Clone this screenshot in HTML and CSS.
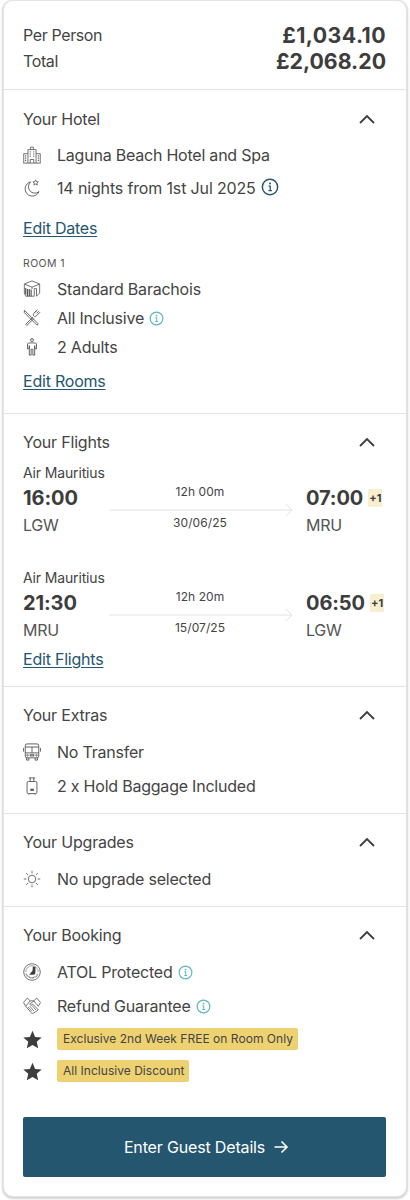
FILE: index.html
```html
<!DOCTYPE html>
<html lang="en">
<head>
<meta charset="utf-8">
<title>Booking summary</title>
<link rel="stylesheet" href="styles.css">
</head>
<body>
<svg class="defs" width="0" height="0" aria-hidden="true">
  <symbol id="chev" viewBox="0 0 18 12"><path d="M2 10 9 3l7 7" fill="none" stroke="#3d3d3d" stroke-width="1.800"/></symbol>
  <symbol id="info" viewBox="0 0 16 16"><circle cx="8" cy="8" r="6.800" fill="none" stroke="currentColor" stroke-width="1.300"/><circle cx="8" cy="4.900" r=".9" fill="currentColor"/><path d="M6.800 7.200H8.200v4M6.700 11.300h3" fill="none" stroke="currentColor" stroke-width="1.100"/></symbol>
  <symbol id="star" viewBox="0 0 18 18"><path d="M9 .8l2.500 5.800 6.200.5-4.700 4.100 1.400 6.100L9 14.100l-5.400 3.200L5 11.200.3 7.100l6.200-.5z" fill="#3d3d3d"/></symbol>
  <symbol id="flightline" viewBox="0 0 184 14"><path d="M0 7h183M177 1l6 6-6 6" fill="none" stroke="#e2e2e2" stroke-width="1"/></symbol>
</svg>
<main class="card">
  <section class="prices">
    <div class="price-row"><span>Per Person</span><strong>£1,034.10</strong></div>
    <div class="price-row"><span>Total</span><strong>£2,068.20</strong></div>
  </section>

  <section class="block hotel">
    <header class="head"><h2>Your Hotel</h2><svg class="chev"><use href="#chev"/></svg></header>
    <div class="row first">
      <svg class="ico" viewBox="0 0 20 20"><g fill="none" stroke="#555" stroke-width=".9"><path d="M5.500 19V4h9v15M.8 19V8.500h4.700M14.500 8.500h4.700V19M.5 19h19M8 19v-4h4v4M8.500 4V1.200h3V4"/><path d="M7.500 6.500h1M11.500 6.500h1M7.500 9h1M11.500 9h1M7.500 11.500h1M11.500 11.500h1M2.300 11h1.200M2.300 13.500h1.200M2.300 16h1.200M16.500 11h1.200M16.500 13.500h1.200M16.500 16h1.200" stroke-width="1.300"/></g></svg>
      <span>Laguna Beach Hotel and Spa</span>
    </div>
    <div class="row nights">
      <svg class="ico" viewBox="0 0 20 20"><path d="M8.500 3.200A8 8 0 1 0 17.800 14 7 7 0 0 1 8.500 3.200z" fill="none" stroke="#555" stroke-width="1"/><path d="M14 1l.9 2 2.100.2-1.600 1.400.5 2.100-1.900-1.100-1.900 1.100.5-2.100L11 3.200l2.100-.2z" fill="none" stroke="#555" stroke-width=".9"/></svg>
      <span>14 nights from 1st Jul 2025</span>
      <svg class="info navy"><use href="#info"/></svg>
    </div>
    <a class="edit dates" href="#">Edit Dates</a>
    <p class="room">ROOM 1</p>
    <div class="row tight">
      <svg class="ico" viewBox="0 0 20 20"><g fill="none" stroke="#555" stroke-width=".9"><path d="M10 1l8.500 3.500v10L15 18V9.500h-2.500V18H3l-1.500-3.500v-10z"/><path d="M1.500 4.500 10 8l8.500-3.500M10 8v2"/><path d="M3 9v7M5 10v8M7 10v8M9 10.500V18" stroke-width="1.300"/></g></svg>
      <span>Standard Barachois</span>
    </div>
    <div class="row tight">
      <svg class="ico" viewBox="0 0 20 20"><g fill="none" stroke="#555" stroke-width="1"><path d="M1.500 1.500 17 16.500l-1.500 1.500L7 9.500 1.500 4z"/><path d="M19 3.500l-4 4c-1 1-2.200 1-3 .2s-.8-2 .2-3l4-4M15 1.800 13 4M17.500 2.500l-2.200 2.200M11 9 3 17l1.300 1.300 8.200-8"/></g></svg>
      <span>All Inclusive</span>
      <svg class="info teal"><use href="#info"/></svg>
    </div>
    <div class="row tight">
      <svg class="ico" viewBox="0 0 20 20"><g fill="none" stroke="#555" stroke-width="1"><circle cx="10" cy="2.300" r="1.600"/><path d="M6 5.500h8l1 1V12h-2V8.500 19h-2v-6.500H9V19H7V8.500 12H5V6.500z"/></g></svg>
      <span>2 Adults</span>
    </div>
    <a class="edit rooms" href="#">Edit Rooms</a>
  </section>

  <section class="block flights sub">
    <header class="head"><h2>Your Flights</h2><svg class="chev"><use href="#chev"/></svg></header>
    <div class="flight">
      <p class="airline">Air Mauritius</p>
      <div class="leg">
        <div class="end"><strong>16:00</strong><span>LGW</span></div>
        <div class="mid"><span>12h 00m</span><svg class="fline"><use href="#flightline"/></svg><span>30/06/25</span></div>
        <div class="end"><div class="arr"><strong>07:00</strong><em>+1</em></div><span>MRU</span></div>
      </div>
    </div>
    <div class="flight second">
      <p class="airline">Air Mauritius</p>
      <div class="leg">
        <div class="end"><strong>21:30</strong><span>MRU</span></div>
        <div class="mid"><span>12h 20m</span><svg class="fline"><use href="#flightline"/></svg><span>15/07/25</span></div>
        <div class="end"><div class="arr"><strong>06:50</strong><em>+1</em></div><span>LGW</span></div>
      </div>
    </div>
    <a class="edit flights-edit" href="#">Edit Flights</a>
  </section>

  <section class="block extras sub">
    <header class="head"><h2>Your Extras</h2><svg class="chev"><use href="#chev"/></svg></header>
    <div class="row first2">
      <svg class="ico" viewBox="0 0 20 20"><g fill="none" stroke="#555" stroke-width="1"><rect x="2.500" y="1" width="15" height="15.500" rx="2"/><path d="M2.500 4.500h15M2.500 11h15M10 4.500V11M.5 5.500v4M19.500 5.500v4M4 16.500V19h2.500v-2.500M13.500 16.500V19H16v-2.500"/><circle cx="5" cy="13.700" r=".9"/><circle cx="15" cy="13.700" r=".9"/><rect x="8" y="13" width="4" height="1.400"/></g></svg>
      <span>No Transfer</span>
    </div>
    <div class="row next">
      <svg class="ico" viewBox="0 0 20 20"><g fill="none" stroke="#555" stroke-width="1"><rect x="4.500" y="5" width="11" height="13.500" rx="1.500"/><path d="M6.500 1h7M8 1v4M12 1v4M6.500 18.500v1M13.500 18.500v1"/><rect x="8.700" y="13.500" width="2.800" height="1.500" fill="#555"/></g></svg>
      <span>2 x Hold Baggage Included</span>
    </div>
  </section>

  <section class="block upgrades sub">
    <header class="head"><h2>Your Upgrades</h2><svg class="chev"><use href="#chev"/></svg></header>
    <div class="row first2">
      <svg class="ico" viewBox="0 0 20 20"><g fill="none" stroke="#555" stroke-width=".9"><circle cx="10" cy="10" r="4.200"/><path d="M10 .8v3M10 16.200v3M.8 10h3M16.200 10h3M3.500 3.500l2.100 2.100M14.400 14.400l2.100 2.100M16.500 3.500l-2.100 2.100M5.600 14.400l-2.100 2.100"/></g></svg>
      <span>No upgrade selected</span>
    </div>
  </section>

  <section class="block booking sub">
    <header class="head"><h2>Your Booking</h2><svg class="chev"><use href="#chev"/></svg></header>
    <div class="row first2">
      <svg class="ico" viewBox="0 0 20 20"><g fill="none" stroke="#555"><circle cx="10" cy="10" r="9.200" stroke-width=".9"/><path d="M3.500 12a7 7 0 0 0 13 0" stroke-width="1.500" stroke-dasharray=".9 .7"/><path d="M3 10a7 7 0 0 1 14 0" stroke-width=".6"/><path d="M10.800 4.300h3V10.500c0 1.500-1 2.500-2.500 2.500H6.500c1-.4 1.800-1 2-2.200 1.500-.6 2.300-2.300 2.300-4z" fill="#3d3d3d" stroke="none"/></g></svg>
      <span>ATOL Protected</span>
      <svg class="info teal"><use href="#info"/></svg>
    </div>
    <div class="row next">
      <svg class="ico" viewBox="0 0 20 20"><g fill="none" stroke="#555" stroke-width=".9"><path d="M.6 6 4.800 1.200 8 4.300 3 10.300zM19.400 6 15.200 1.200 12 4.300l5 6z"/><path d="M8 4.300h4M12 4.300 7.500 8c.8 1.200 2.300 1.200 3.500 0l6 6.300M3 10.300 9 17.300c.8 1 2.200 1.200 3 .4l5-3.400"/><path d="M5.500 11l4.500 5M7.500 10l4.500 5.500M10 9.500l4.500 5" stroke-width=".8"/></g></svg>
      <span>Refund Guarantee</span>
      <svg class="info teal"><use href="#info"/></svg>
    </div>
    <div class="row promo one"><svg class="ico star"><use href="#star"/></svg><span class="badge">Exclusive 2nd Week FREE on Room Only</span></div>
    <div class="row promo two"><svg class="ico star"><use href="#star"/></svg><span class="badge">All Inclusive Discount</span></div>
    <button class="cta" type="button">Enter Guest Details
      <svg class="arrow" viewBox="0 0 16 14"><path d="M1.500 7h12.500M8.500 1.500 14 7l-5.500 5.500" fill="none" stroke="#fff" stroke-width="1.600"/></svg>
    </button>
  </section>
</main>
</body>
</html>
```

FILE: styles.css
```css
* { box-sizing: border-box; }
html, body { margin: 0; padding: 0; background: #fff; }
body {
  width: 410px;
  height: 1200px;
  overflow: hidden;
  font-family: Inter, "Liberation Sans", sans-serif;
  font-size: 16px;
  line-height: 24px;
  letter-spacing: -.22px;
  color: #444;
}
.defs { position: absolute; }
.card {
  margin: 0 3px;
  height: 1197px;
  border: 1px solid #e4e4e4;
  border-radius: 10px;
  box-shadow: 0 1px 2px 1px #d4d4d4;
  background: #fff;
}
.prices { padding: 21px 20px 15px 19px; border-bottom: 1px solid #e4e4e4; height: 89px; }
.price-row { display: flex; justify-content: space-between; align-items: center; height: 26px; }
.price-row span { letter-spacing: -.38px; }
.price-row strong { font-size: 21.3px; font-weight: 700; color: #3d3d3d; letter-spacing: 0; }
.price-row:first-child strong { letter-spacing: .45px; }
.block { padding: 17px 19px 0; border-bottom: 1px solid #e4e4e4; }
.block.sub { padding-top: 16px; }
.block:last-child { border-bottom: 0; }
.hotel { height: 324px; }
.flights { height: 273px; }
.extras { height: 127px; }
.upgrades { height: 93px; }
.head { display: flex; justify-content: space-between; align-items: center; height: 24px; }
.head h2 { margin: 0; font-size: 16px; font-weight: 400; color: #444; letter-spacing: -.2px; }
.chev { width: 18px; height: 12px; margin-right: 11px; }
.row { display: flex; align-items: center; height: 24px; }
.ico { width: 18px; height: 18px; margin-right: 16px; flex: none; }
.first { margin-top: 12px; }
.nights { margin-top: 9px; }
.nights span { letter-spacing: -.15px; }
.first2 { margin-top: 13px; }
.next { margin-top: 10px; }
.tight { margin-top: 5px; }
.info { width: 18px; height: 18px; margin-left: 5px; margin-top: -3px; }
.teal { width: 15px; height: 15px; margin-top: 0; color: #62b8c6; }
.navy { color: #24566f; }
.edit { display: block; width: max-content; color: #24566f; text-decoration: underline; text-underline-offset: 2px; }
.dates { margin-top: 16px; }
.rooms { margin-top: 10px; }
.room { margin: 17px 0 0; font-size: 10.500px; line-height: 14px; letter-spacing: .4px; color: #555; height: 14px; }
.room + .row { margin-top: 6px; }
.flight { margin-top: 8px; }
.airline { margin: 0; font-size: 14px; line-height: 22px; letter-spacing: -.15px; }
.flight.second { margin-top: 29px; }
.leg { display: grid; grid-template-columns: 86px 185px 1fr; }
.end { display: flex; flex-direction: column; }
.end + .mid + .end { padding-left: 12px; }
.end strong { font-size: 20px; line-height: 28px; color: #3d3d3d; font-weight: 700; letter-spacing: -.1px; }
.end span { line-height: 26px; color: #555; }
.arr { display: flex; align-items: center; gap: 5px; }
.arr em { font-style: normal; font-size: 11px; font-weight: 700; line-height: 18px; padding: 0 1px; background: #f8efd0; color: #3d3d3d; letter-spacing: 0; }
.mid { display: flex; flex-direction: column; align-items: center; font-size: 12px; line-height: 16px; letter-spacing: .08px; padding-right: 3px; }
.fline { width: 184px; height: 14px; display: block; margin: 3px -2px -2px 0; flex: none; }
.flights-edit { margin-top: 4px; }
.promo.one { margin-top: 9px; }
.promo.two { margin-top: 8px; }
.star { width: 19px; height: 19px; margin-right: 15px; }
.badge { background: #eed272; border-radius: 2px; font-size: 12px; line-height: 22px; padding: 0 5px 0 6px; letter-spacing: .03px; color: #444; }
.cta {
  display: flex; align-items: center; justify-content: center; gap: 8px;
  width: 363px; height: 60px; margin-top: 34px; padding-left: 10px;
  background: #24566f; color: #fff; border: 0; border-radius: 2px;
  font: 400 16px/24px Inter, "Liberation Sans", sans-serif;
  letter-spacing: -.16px;
}
.arrow { width: 16px; height: 14px; }
```
